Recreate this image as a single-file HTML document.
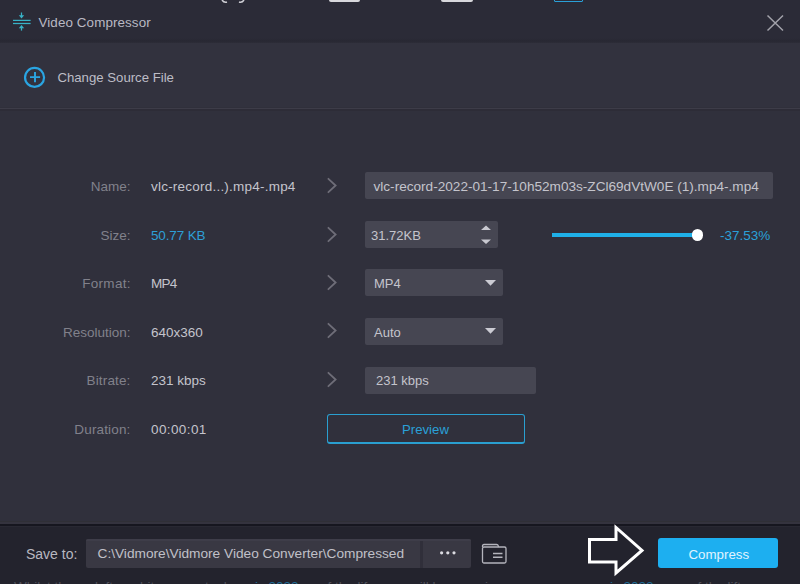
<!DOCTYPE html>
<html><head><meta charset="utf-8">
<style>
*{margin:0;padding:0;box-sizing:border-box}
html,body{width:800px;height:584px;overflow:hidden;background:#30303c;font-family:"Liberation Sans",sans-serif}
.abs{position:absolute}
#title{left:0;top:0;width:800px;height:43px;background:linear-gradient(#2b2b37 0,#2b2b37 38px,#282833 41px,#2d2d38 43px)}
.t{position:absolute;white-space:nowrap;line-height:1;font-size:13.5px}
.lbl{color:#81818b;text-align:right;width:100px;left:30.5px;font-size:13.5px}
.val{color:#c4c4cc;left:151px}
.box{position:absolute;background:#464652;border-radius:2px}
.chev{position:absolute;left:326px;width:12px;height:18px}
#bottom{left:0;top:525px;width:800px;height:59px;background:#23232d}
</style></head><body>
<div class="abs" style="left:0;top:43px;width:800px;height:64px;background:#32323e"></div>
<div id="title" class="abs"></div>
<!-- top fragments -->
<div class="abs" style="left:329px;top:-3px;width:31px;height:5px;background:#d8d8dc;border-radius:2px"></div>
<div class="abs" style="left:441px;top:-3px;width:32px;height:5px;background:#d8d8dc;border-radius:2px"></div>
<div class="abs" style="left:554px;top:-3px;width:29px;height:5px;border:1px solid #2aa0d8;border-radius:1px"></div>
<svg class="abs" style="left:218px;top:0" width="30" height="4"><path d="M4,0 Q6,3 9,2 M21,2 Q24,3 26,0" stroke="#d0d0d6" stroke-width="1.5" fill="none"/></svg>

<!-- title icon -->
<svg class="abs" style="left:12px;top:11px" width="22" height="22" viewBox="0 0 22 22">
<g stroke="#38b2c6" stroke-width="1.25" fill="none">
<line x1="1" y1="9.4" x2="18.6" y2="9.4"/><line x1="1" y1="12.5" x2="18.6" y2="12.5"/>
<line x1="9.5" y1="1.5" x2="9.5" y2="5"/><line x1="9.5" y1="16.5" x2="9.5" y2="19.6"/>
</g>
<path d="M6.8,4.3 L12.2,4.3 L9.5,7.6 Z" fill="#38b2c6"/>
<path d="M6.8,17.2 L12.2,17.2 L9.5,14 Z" fill="#38b2c6"/>
</svg>
<div class="t" style="left:38.5px;top:16px;color:#b9b9c3;font-size:13.4px;letter-spacing:0.1px">Video Compressor</div>
<svg class="abs" style="left:766px;top:13.5px" width="19" height="18"><path d="M1.5,1.5 L17,16.5 M17,1.5 L1.5,16.5" stroke="#a2a2aa" stroke-width="1.5"/></svg>

<!-- change source -->
<svg class="abs" style="left:23px;top:66px" width="24" height="24" viewBox="0 0 24 24">
<circle cx="11.55" cy="11.4" r="9.5" stroke="#2aa5e2" stroke-width="2.2" fill="none"/>
<path d="M7,11.1 H17.1 M12,6 V16.2" stroke="#2aa5e2" stroke-width="1.9"/>
</svg>
<div class="t" style="left:57.4px;top:71px;color:#bdbdc6;font-size:13.2px">Change Source File</div>
<div class="abs" style="left:0;top:107px;width:800px;height:1px;background:#30303b"></div>
<div class="abs" style="left:0;top:108px;width:800px;height:1px;background:#3d3c48"></div>
<div class="abs" style="left:0;top:109px;width:800px;height:2px;background:#2d2c37"></div>

<!-- rows -->
<div class="t lbl" style="top:180px">Name:</div>
<div class="t val" style="top:180px;letter-spacing:0.22px">vlc-record...).mp4-.mp4</div>
<svg class="chev" style="top:177px" width="12" height="18"><path d="M2.4,1.8 L9.6,8.5 L2.4,15.2" stroke="#6e6d78" stroke-width="1.8" fill="none" stroke-linecap="round"/></svg>
<div class="box" style="left:365px;top:172px;width:408px;height:27px"></div>
<div class="t" style="left:373.5px;top:180px;color:#c4c4cc;font-size:13.6px">vlc-record-2022-01-17-10h52m03s-ZCl69dVtW0E (1).mp4-.mp4</div>

<div class="t lbl" style="top:229px">Size:</div>
<div class="t val" style="top:229px;color:#2e9fd6;letter-spacing:-0.15px">50.77 KB</div>
<svg class="chev" style="top:226px" width="12" height="18"><path d="M2.4,1.8 L9.6,8.5 L2.4,15.2" stroke="#6e6d78" stroke-width="1.8" fill="none" stroke-linecap="round"/></svg>
<div class="box" style="left:365px;top:221px;width:133px;height:27px"></div>
<div class="t" style="left:371px;top:229px;color:#c4c4cc;font-size:13px">31.72KB</div>
<svg class="abs" style="left:479px;top:224px" width="14" height="22"><path d="M2,6 L7,1.5 L12,6 Z M2,15.5 L7,20 L12,15.5 Z" fill="#c8c8d0"/></svg>
<div class="abs" style="left:552px;top:232.5px;width:146px;height:4.5px;background:#1fb0e8"></div>
<div class="abs" style="left:691.5px;top:229px;width:11.5px;height:11.5px;background:#fff;border-radius:50%"></div>
<div class="t" style="left:720px;top:229px;color:#2aa0d8;font-size:13.5px">-37.53%</div>

<div class="t lbl" style="top:277px;letter-spacing:0.3px;left:30.8px">Format:</div>
<div class="t val" style="top:277px;letter-spacing:-0.8px">MP4</div>
<svg class="chev" style="top:274px" width="12" height="18"><path d="M2.4,1.8 L9.6,8.5 L2.4,15.2" stroke="#6e6d78" stroke-width="1.8" fill="none" stroke-linecap="round"/></svg>
<div class="box" style="left:365px;top:269px;width:138px;height:27px"></div>
<div class="t" style="left:374px;top:277px;color:#c4c4cc;font-size:13px">MP4</div>
<svg class="abs" style="left:484px;top:280px" width="13" height="8"><path d="M1,0 L12,0 L6.5,5.8 Z" fill="#cbcbd3"/></svg>

<div class="t lbl" style="top:326px">Resolution:</div>
<div class="t val" style="top:326px">640x360</div>
<svg class="chev" style="top:322px" width="12" height="18"><path d="M2.4,1.8 L9.6,8.5 L2.4,15.2" stroke="#6e6d78" stroke-width="1.8" fill="none" stroke-linecap="round"/></svg>
<div class="box" style="left:365px;top:318px;width:138px;height:27px"></div>
<div class="t" style="left:374px;top:326px;color:#c4c4cc;font-size:13px">Auto</div>
<svg class="abs" style="left:484px;top:328.3px" width="13" height="8"><path d="M1,0 L12,0 L6.5,5.8 Z" fill="#cbcbd3"/></svg>

<div class="t lbl" style="top:374px;letter-spacing:0.15px">Bitrate:</div>
<div class="t val" style="top:374px">231 kbps</div>
<svg class="chev" style="top:371px" width="12" height="18"><path d="M2.4,1.8 L9.6,8.5 L2.4,15.2" stroke="#6e6d78" stroke-width="1.8" fill="none" stroke-linecap="round"/></svg>
<div class="box" style="left:365px;top:367px;width:171px;height:26.5px"></div>
<div class="t" style="left:376px;top:374px;color:#c4c4cc;font-size:13px">231 kbps</div>

<div class="t lbl" style="top:423px;letter-spacing:0.15px">Duration:</div>
<div class="t val" style="top:423px;letter-spacing:0.4px">00:00:01</div>
<div class="abs" style="left:326.5px;top:414px;width:198px;height:29.5px;border:1.5px solid #2a9fd0;border-bottom-width:2px;border-radius:3px"></div>
<div class="t" style="left:402px;top:423px;color:#2aa0d8;font-size:13.2px">Preview</div>

<!-- bottom -->
<div class="abs" style="left:0;top:521px;width:800px;height:1px;background:#2f2f36"></div>
<div class="abs" style="left:0;top:522px;width:800px;height:2px;background:#34333e"></div>
<div id="bottom" class="abs"></div>
<div class="abs" style="left:0;top:524px;width:800px;height:1.5px;background:#16161f"></div><div class="abs" style="left:0;top:526px;width:800px;height:1px;background:#282832"></div>
<div class="t" style="left:26px;top:547px;color:#b8b8c0;font-size:14px">Save to:</div>
<div class="abs" style="left:86px;top:539px;width:385px;height:29px;background:#393843;border-radius:2px"></div>
<div class="abs" style="left:419.5px;top:539px;width:3px;height:29px;background:#302f3a"></div><div class="abs" style="left:86px;top:539px;width:385px;height:2px;background:#3e3d49;border-radius:2px 2px 0 0"></div>
<div class="t" style="left:97.5px;top:547px;color:#c0c0c8;font-size:13.7px">C:\Vidmore\Vidmore Video Converter\Compressed</div>
<svg class="abs" style="left:439px;top:550px" width="18" height="6"><circle cx="2.6" cy="2.8" r="1.6" fill="#dcdce2"/><circle cx="8.8" cy="2.8" r="1.6" fill="#dcdce2"/><circle cx="15" cy="2.8" r="1.6" fill="#dcdce2"/></svg>
<svg class="abs" style="left:480px;top:542px" width="28" height="23" viewBox="0 0 28 23">
<path d="M2.5,5 V4 Q2.5,2.5 4,2.5 H16.5 Q18,2.5 18.3,3.8 L18.6,5" stroke="#b4b4bc" stroke-width="1.3" fill="none"/>
<rect x="2.5" y="5" width="23.5" height="16" rx="1.5" stroke="#b4b4bc" stroke-width="1.3" fill="none"/>
<path d="M13,11.5 H22.5 M13,15.3 H22.5" stroke="#b4b4bc" stroke-width="1.4"/>
</svg>
<svg class="abs" style="left:580px;top:520px" width="70" height="64" viewBox="580 520 70 64">
<path d="M589.5,539.5 H616 V527.5 L642,550.5 L616,573 V562 H589.5 Z" stroke="#ffffff" stroke-width="3" fill="none" stroke-linejoin="miter"/>
</svg>
<div class="abs" style="left:658px;top:538px;width:120px;height:30px;background:#1daff0;border-radius:3px"></div>
<div class="t" style="left:688.5px;top:547.5px;color:#e0f4ff;font-size:13.3px">Compress</div>
<div class="abs" style="left:0;top:577px;width:800px;height:7px;overflow:hidden;font-size:15px;color:#50505a">
<div class="t" style="left:14px;top:3px">Whilst the</div>
<div class="t" style="left:95px;top:3px">left</div>
<div class="t" style="left:140px;top:3px">bit</div>
<div class="t" style="left:205px;top:3px">tool</div>
<div class="t" style="left:255px;top:3px;color:#1f6c96">is 2022</div>
<div class="t" style="left:320px;top:3px">of the life</div>
<div class="t" style="left:410px;top:3px">will be</div>
<div class="t" style="left:485px;top:3px">in</div>
<div class="t" style="left:610px;top:3px;color:#1f6c96">is 2022</div>
<div class="t" style="left:690px;top:3px">of the lift</div>
</div>
</body></html>
